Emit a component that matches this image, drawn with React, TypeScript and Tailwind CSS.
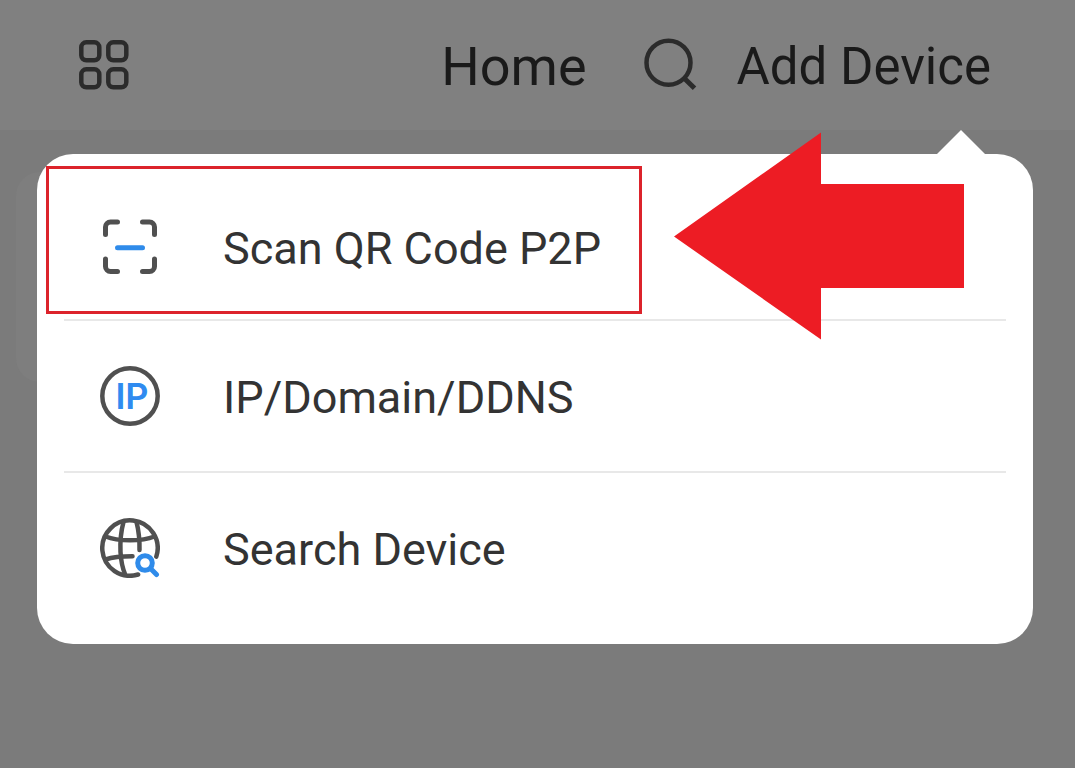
import React from 'react';

interface MenuItem {
  label: string;
  icon: React.ReactNode;
}

const ScanIcon: React.FC = () => (
  <svg className="w-[60px] h-[60px] shrink-0" viewBox="0 0 60 60" fill="none" stroke="#505050" strokeWidth={5} strokeLinecap="round" strokeLinejoin="round" aria-hidden="true">
    <path d="M5.5 17.5V10a5 5 0 0 1 5-5h7" />
    <path d="M42.5 5h7a5 5 0 0 1 5 5v7.5" />
    <path d="M54.5 42v7.5a5 5 0 0 1-5 5h-7" />
    <path d="M17.5 54.5h-7a5 5 0 0 1-5-5V42" />
    <path d="M17.5 30.7h25" stroke="#2f8bea" />
  </svg>
);

const IpIcon: React.FC = () => (
  <svg className="w-[60px] h-[60px] shrink-0" viewBox="0 0 60 60" fill="none" aria-hidden="true">
    <circle cx="30" cy="30" r="27.7" stroke="#505050" strokeWidth={4.5} />
    <text x="32" y="43" textAnchor="middle" fill="#2f8bf0" className="font-['Inter',sans-serif] text-[36px] font-semibold">IP</text>
  </svg>
);

const GlobeSearchIcon: React.FC = () => (
  <svg className="w-[60px] h-[60px] shrink-0" viewBox="0 0 60 60" fill="none" stroke="#505050" strokeWidth={4.5} strokeLinecap="round" aria-hidden="true">
    <path d="M38.1 56.5A27.7 27.7 0 1 1 56.3 38.6" />
    <path d="M23.5 4C20.5 15 20 23 20.5 34C21 43 22.5 50 25 56" />
    <path d="M36.5 4C38.8 13 39.7 22 39.5 32" />
    <path d="M5.5 18.5C13 21.5 21 22.3 30 22.3S47 21.5 54.5 18.5" />
    <path d="M5.5 41.5C13 39 20 38.3 32.5 38.3" />
    <g stroke="#2f8bea" strokeWidth={5}>
      <circle cx="45" cy="45" r="7.3" />
      <path d="M51 51l5.5 5.5" />
    </g>
  </svg>
);

const menuItems: MenuItem[] = [
  { label: 'Scan QR Code P2P', icon: <ScanIcon /> },
  { label: 'IP/Domain/DDNS', icon: <IpIcon /> },
  { label: 'Search Device', icon: <GlobeSearchIcon /> },
];

const Header: React.FC = () => (
  <header className="h-[130px] flex items-center justify-between bg-[#808080] pl-[78px] pr-[84px] text-[#1a1a1a]">
    <button aria-label="Device list">
      <svg className="w-[52px] h-[52px]" viewBox="0 0 52 52" fill="none" stroke="#2b2b2b" strokeWidth={4.5} aria-hidden="true">
        <rect x="3.3" y="3.3" width="18" height="18" rx="5" />
        <rect x="30.3" y="3.3" width="18" height="18" rx="5" />
        <rect x="3.3" y="30.3" width="18" height="18" rx="5" />
        <rect x="30.3" y="30.3" width="18" height="18" rx="5" />
      </svg>
    </button>
    <div className="flex items-center">
      <h1 className="pt-1 text-[54px] leading-[64px]">Home</h1>
      <button className="ml-[58px]" aria-label="Search">
        <svg className="w-[52px] h-[52px] overflow-visible" viewBox="0 0 52 52" fill="none" stroke="#2b2b2b" strokeWidth={4.5} aria-hidden="true">
          <circle cx="23.5" cy="23.7" r="22" />
          <path d="M39.5 39.5l10 9.7" strokeWidth={5} />
        </svg>
      </button>
      <button className="ml-10 pt-1 text-[51px] leading-[64px]">Add Device</button>
    </div>
  </header>
);

const App: React.FC = () => {
  return (
    <div className="min-h-screen bg-[#7b7b7b] font-['Roboto',sans-serif]">
      <Header />
      <main className="relative pt-6 pl-[37px] pr-[42px]">
        {/* Dimmed device card behind the menu */}
        <div className="absolute left-4 right-[42px] top-[42px] h-[210px] rounded-3xl bg-[#7e7e7e]" />

        <nav className="relative rounded-[36px] bg-white pt-5 pb-[21px] text-[#333333]">
          <svg className="absolute right-12 -top-6 w-12 h-6" viewBox="0 0 48 24" fill="#ffffff" aria-hidden="true">
            <path d="M0 24L24 0L48 24Z" />
          </svg>

          <ul className="px-[27px]">
            {menuItems.map((item) => (
              <li key={item.label} className="h-[152px] first:h-[147px] last:h-[150px] border-b-2 border-[#e8e8e8] last:border-b-0">
                <button className="flex h-full w-full items-center gap-[63px] pl-9 text-left">
                  {item.icon}
                  <span className="pt-1 text-[45px] leading-[54px]">{item.label}</span>
                </button>
              </li>
            ))}
          </ul>

          {/* Callout box and arrow for the first entry */}
          <div className="pointer-events-none absolute left-[9px] top-3 h-[148px] w-[596px] border-3 border-[#dc232b]" />
          <svg className="pointer-events-none absolute right-[69px] -top-[22px] w-[290px] h-[208px]" viewBox="0 0 290 208" fill="#ed1c24" aria-hidden="true">
            <path d="M0 104.5L147 0.5V52H290V156H147V207.5Z" />
          </svg>
        </nav>
      </main>
    </div>
  );
};

export default App;
